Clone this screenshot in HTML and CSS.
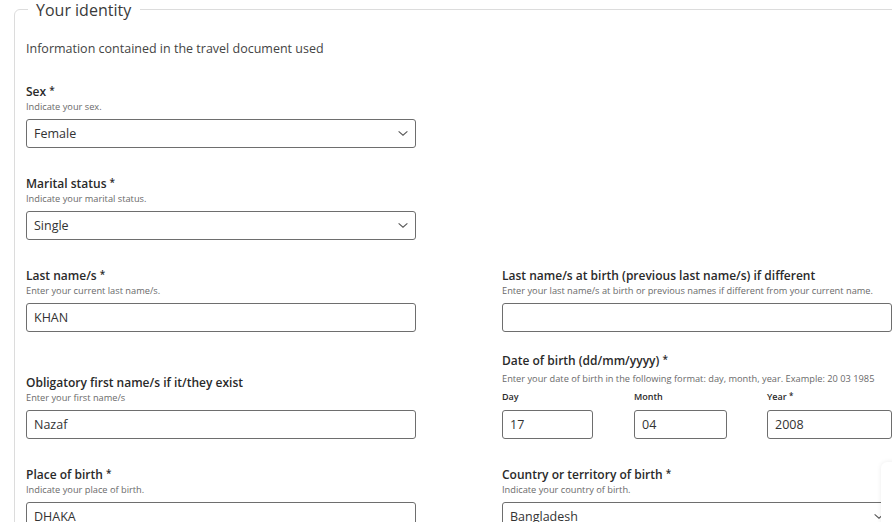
FILE: index.html
```html
<!DOCTYPE html>
<html lang="en">
<head>
  <meta charset="UTF-8" />
  <meta name="viewport" content="width=device-width, initial-scale=1.0"/>
  <title>Your identity</title>
  <link rel="stylesheet" href="styles.css">
</head>
<body>
  <fieldset class="identity">
    <legend>Your identity</legend>
    <p class="intro">Information contained in the travel document used</p>

    <div class="form-grid">
      <div class="field">
        <label for="sex">Sex <span class="req">*</span></label>
        <div class="hint">Indicate your sex.</div>
        <div class="select-wrap">
          <select id="sex"><option>Female</option></select>
          <svg class="chevron" viewBox="0 0 12 8"><path d="M1 1.5l5 4.5 5-4.5"/></svg>
        </div>
      </div>
      <div class="empty"></div>

      <div class="field">
        <label for="marital">Marital status <span class="req">*</span></label>
        <div class="hint">Indicate your marital status.</div>
        <div class="select-wrap">
          <select id="marital"><option>Single</option></select>
          <svg class="chevron" viewBox="0 0 12 8"><path d="M1 1.5l5 4.5 5-4.5"/></svg>
        </div>
      </div>
      <div class="empty"></div>

      <div class="field">
        <label for="lastname">Last name/s <span class="req">*</span></label>
        <div class="hint">Enter your current last name/s.</div>
        <input type="text" id="lastname" value="KHAN">
      </div>
      <div class="field">
        <label for="birthname">Last name/s at birth (previous last name/s) if different</label>
        <div class="hint">Enter your last name/s at birth or previous names if different from your current name.</div>
        <input type="text" id="birthname" value="">
      </div>

      <div class="field">
        <label for="firstname">Obligatory first name/s if it/they exist</label>
        <div class="hint">Enter your first name/s</div>
        <input type="text" id="firstname" value="Nazaf">
      </div>
      <div class="field field-date">
        <label>Date of birth (dd/mm/yyyy) <span class="req">*</span></label>
        <div class="hint">Enter your date of birth in the following format: day, month, year. Example: 20 03 1985</div>
        <div class="date-parts">
          <div class="date-part day">
            <label for="day">Day</label>
            <input type="text" id="day" value="17">
          </div>
          <div class="date-part month">
            <label for="month">Month</label>
            <input type="text" id="month" value="04">
          </div>
          <div class="date-part year">
            <label for="year">Year <span class="req">*</span></label>
            <input type="text" id="year" value="2008">
          </div>
        </div>
      </div>

      <div class="field">
        <label for="place">Place of birth <span class="req">*</span></label>
        <div class="hint">Indicate your place of birth.</div>
        <input type="text" id="place" value="DHAKA">
      </div>
      <div class="field">
        <label for="country">Country or territory of birth <span class="req">*</span></label>
        <div class="hint">Indicate your country of birth.</div>
        <div class="select-wrap">
          <select id="country"><option>Bangladesh</option></select>
          <svg class="chevron" viewBox="0 0 12 8"><path d="M1 1.5l5 4.5 5-4.5"/></svg>
        </div>
      </div>
    </div>
  </fieldset>

  <div class="floating-panel"></div>
</body>
</html>
```

FILE: styles.css
```css
:root {
  --text-color: #2a2a2a;
  --hint-color: #6a6a6a;
  --border-color: #6e6e6e;
  --fieldset-border: #dcdcdc;
}

* {
  box-sizing: border-box;
}

html, body {
  overflow: hidden;
}

body {
  margin: 0;
  padding: 0 0 0 14px;
  font-family: 'Open Sans', 'Liberation Sans', sans-serif;
  color: var(--text-color);
  background: #fff;
}

.identity {
  margin: 0;
  width: 900px;
  min-height: 600px;
  padding: 22px 11px 0;
  border: 1px solid var(--fieldset-border);
  border-radius: 6px;
}

.identity legend {
  padding: 1px 9px 0 8px;
  margin-left: 2px;
  font-size: 16px;
  line-height: 18px;
  color: #3a3a3a;
}

.intro {
  margin: 0 0 26px;
  font-size: 12.5px;
  line-height: 16px;
  color: #444;
}

.form-grid {
  display: grid;
  grid-template-columns: 390px 390px;
  column-gap: 86px;
  row-gap: 27px;
  align-items: end;
}

.field label {
  display: block;
  font-size: 12px;
  line-height: 17px;
  font-weight: 600;
  color: var(--text-color);
}

.req {
  font-size: 10px;
  line-height: 0;
  vertical-align: 2px;
}

.hint {
  font-size: 9.25px;
  line-height: 13px;
  color: var(--hint-color);
  margin-bottom: 6px;
}

.field input,
.field select {
  display: block;
  width: 100%;
  height: 29px;
  padding: 0 7px;
  border: 1px solid var(--border-color);
  border-radius: 3px;
  background: #fff;
  font-family: inherit;
  font-size: 12.5px;
  color: #333;
  outline: none;
}

.field select {
  appearance: none;
  -webkit-appearance: none;
}

.select-wrap {
  position: relative;
}

.chevron {
  position: absolute;
  right: 7px;
  top: 11px;
  width: 12px;
  height: 7px;
  fill: none;
  stroke: #555;
  stroke-width: 1.2;
}

.field-date {
  margin-top: -7px;
}

.field-date .hint {
  margin-top: 3px;
  margin-bottom: 5px;
}

.date-parts {
  display: flex;
}

.date-part label {
  font-size: 9px;
  line-height: 14px;
  margin-bottom: 6px;
}

.date-part .req {
  font-size: 8px;
  vertical-align: 1px;
}

.date-part.day {
  width: 132px;
}

.date-part.day input {
  width: 91px;
}

.date-part.month {
  width: 133px;
}

.date-part.month input {
  width: 93px;
}

.date-part.year {
  flex: 1;
}

.floating-panel {
  position: absolute;
  left: 881px;
  top: 462px;
  width: 60px;
  height: 100px;
  background: #fff;
  border-radius: 6px;
  box-shadow: 0 0 5px rgba(0, 0, 0, 0.08);
}
```
